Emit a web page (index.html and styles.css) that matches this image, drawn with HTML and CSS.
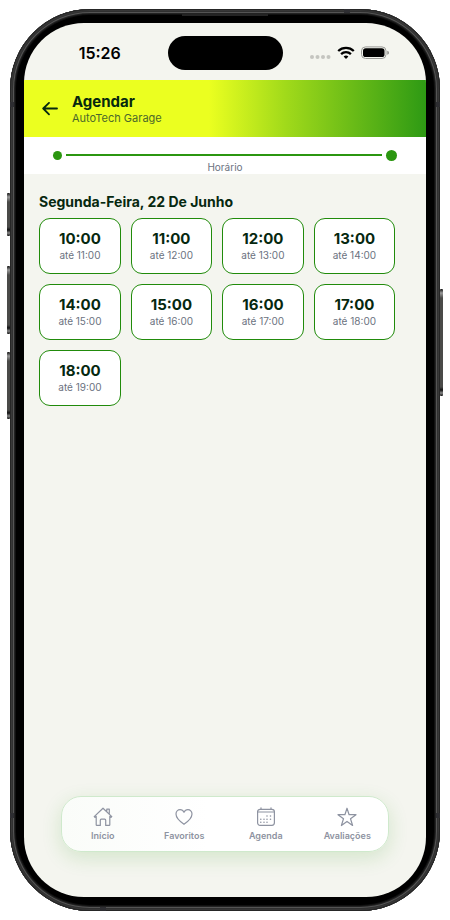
FILE: index.html
```html
<!DOCTYPE html>
<html lang="pt-BR">
<head>
<meta charset="utf-8">
<meta name="viewport" content="width=device-width, initial-scale=1">
<title>Agendar</title>
<link rel="stylesheet" href="styles.css">
</head>
<body>
<div class="phone">
  <span class="key key-action"></span>
  <span class="key key-up"></span>
  <span class="key key-down"></span>
  <span class="key key-power"></span>
  <span class="antenna antenna-left"></span>
  <span class="antenna antenna-right"></span>
  <span class="antenna antenna-left antenna-low"></span>
  <span class="antenna antenna-right antenna-low"></span>
  <span class="antenna antenna-top"></span>
  <span class="antenna antenna-bottom"></span>
  <span class="earpiece"></span>
  <div class="bezel">
  <div class="screen">
    <div class="status">
      <span class="clock">15:26</span>
      <span class="island"></span>
      <span class="signals">
        <svg width="21" height="14" viewBox="0 0 21 14" fill="#c4c5c0"><circle cx="2" cy="11" r="2"/><circle cx="7.500" cy="11" r="2"/><circle cx="13" cy="11" r="2"/><circle cx="18.500" cy="11" r="2"/></svg>
        <svg width="18" height="14" viewBox="0 0 18 14" fill="none" stroke="#000" stroke-width="2.300"><path d="M1.200 5a11.200 11.200 0 0 1 15.600 0"/><path d="M4.100 8.100a7 7 0 0 1 9.800 0"/><path d="M6.600 10.500a3.600 3.600 0 0 1 4.800 0L9 13z" fill="#000" stroke="none"/></svg>
        <svg width="28" height="14" viewBox="0 0 28 14"><rect x=".5" y=".9" width="24.500" height="11.600" rx="4" fill="none" stroke="#999a96"/><rect x="2" y="2.300" width="21.500" height="8.800" rx="2.700"/><path d="M26.200 4.700v4q2-.6 2-2t-2-2z" fill="#999a96"/></svg>
      </span>
    </div>
    <header class="header">
      <button class="back" type="button" aria-label="Voltar">
        <svg width="16" height="14" viewBox="0 0 16 14" fill="none" stroke="#06280f" stroke-width="1.800" stroke-linecap="round" stroke-linejoin="round"><path d="M15 6.500H1.200M7 .9 1.200 6.500 7 12.300"/></svg>
      </button>
      <div>
        <h1 class="title">Agendar</h1>
        <p class="subtitle">AutoTech Garage</p>
      </div>
    </header>
    <div class="stepper">
      <div class="track"><span class="dot"></span><span class="line"></span><span class="dot dot-current"></span></div>
      <span class="step-name">Horário</span>
    </div>
    <main class="content">
      <h2 class="day">Segunda-Feira, 22 De Junho</h2>
      <div class="slots">
        <button class="slot" type="button"><b>10:00</b><span>até 11:00</span></button>
        <button class="slot" type="button"><b>11:00</b><span>até 12:00</span></button>
        <button class="slot" type="button"><b>12:00</b><span>até 13:00</span></button>
        <button class="slot" type="button"><b>13:00</b><span>até 14:00</span></button>
        <button class="slot" type="button"><b>14:00</b><span>até 15:00</span></button>
        <button class="slot" type="button"><b>15:00</b><span>até 16:00</span></button>
        <button class="slot" type="button"><b>16:00</b><span>até 17:00</span></button>
        <button class="slot" type="button"><b>17:00</b><span>até 18:00</span></button>
        <button class="slot" type="button"><b>18:00</b><span>até 19:00</span></button>
      </div>
    </main>
    <nav class="tabs">
      <a class="tab" href="#inicio">
        <svg viewBox="0 0 20 20"><path d="M1.200 9.600 10 1.200l8.800 8.400-.8.800-1.200-1v8.400q0 .6-.6.600h-3.500v-5.200q0-1-1-1H8.300q-1 0-1 1v5.200H3.800q-.6 0-.6-.6V9.400l-1.200 1zM13.800 4.600V2.100h2.500V7"/></svg>
        Início
      </a>
      <a class="tab" href="#favoritos">
        <svg viewBox="0 0 20 20"><path d="M10 17.300C6 14.600 2 11.300 2 7.100 2 4.500 3.900 2.700 6.100 2.700c1.700 0 3.100.9 3.900 2.600.8-1.700 2.200-2.600 3.900-2.600C16.100 2.700 18 4.500 18 7.100c0 4.200-4 7.500-8 10.200z"/></svg>
        Favoritos
      </a>
      <a class="tab" href="#agenda">
        <svg viewBox="0 0 20 20"><rect x="1.600" y="2.300" width="16.800" height="16" rx="2.500"/><path d="M1.600 5h16.800M5 .8v1.500M15 .8v1.500"/><path class="days" d="M11 9h0M14.500 9h0M4.800 12.200h0M8 12.200h0M11 12.200h0M14.500 12.200h0M4.800 15.300h0M8 15.300h0M11 15.300h0"/></svg>
        Agenda
      </a>
      <a class="tab" href="#avaliacoes">
        <svg viewBox="0 0 20 20"><path d="m10 1.200 2.100 6.500H19l-5.500 4.100 2.100 6.700L10 14.400l-5.600 4.100 2.100-6.700L1 7.700h6.900z"/></svg>
        Avaliações
      </a>
    </nav>
  </div>
  </div>
</div>
</body>
</html>
```

FILE: styles.css
```css
* { box-sizing: border-box; }

body {
  margin: 0;
  padding: 9px 10px;
  background: #fff;
  color: #06280f;
  font-family: Inter, "Liberation Sans", sans-serif;
}

h1, h2, p { margin: 0; }
button { font: inherit; color: inherit; cursor: pointer; }

.phone {
  position: relative;
  display: flex;
  min-height: calc(100vh - 18px);
  padding: 6px;
  border-radius: 80px;
  background: #101010;
  box-shadow: inset 0 0 0 1px #262626, inset 0 0 0 2px #383838, inset 0 0 0 3px #303030, inset 0 0 0 4px #545454, inset 0 0 0 5px #222;
}

.bezel {
  flex: 1;
  display: flex;
  padding: 8px;
  border-radius: 74px;
  background: #000;
}

.key {
  position: absolute;
  width: 3px;
  border-radius: 1px;
  background: linear-gradient(#111, #999 4px, #4a4a48 9px, #4a4a48 calc(100% - 9px), #111 calc(100% - 6px), #888 calc(100% - 3px), #111);
}
.key-action { left: -3px; top: 184px; height: 43px; }
.key-up { left: -3px; top: 257px; height: 68px; }
.key-down { left: -3px; top: 343px; height: 67px; }
.key-power { right: -3px; top: 280px; height: 107px; }

.antenna {
  position: absolute;
  width: 4px;
  height: 5px;
  background: #2e2e32;
}
.antenna-left { left: 0; top: 93px; }
.antenna-right { right: 0; top: 93px; }
.antenna-low { top: auto; bottom: 93px; }
.antenna-top { top: 0; right: 90px; width: 6px; height: 4px; }
.antenna-bottom { bottom: 0; left: 90px; width: 6px; height: 4px; }

.earpiece {
  position: absolute;
  top: 5px;
  left: 40%;
  right: 40%;
  height: 2px;
  background: #242424;
}

.screen {
  flex: 1;
  display: flex;
  flex-direction: column;
  overflow: hidden;
  border-radius: 60px;
  background: #f4f5ef;
}

.status {
  display: grid;
  grid-template-columns: 1fr 115px 1fr;
  align-items: center;
  height: 57px;
  padding-top: 2px;
  color: #000;
}
.clock { padding-left: 8px; text-align: center; font-size: 16px; font-weight: 600; }
.island { height: 34px; border-radius: 17px; background: #000; }
.signals { display: flex; justify-content: center; gap: 6px; padding-right: 10px; }

.header {
  display: flex;
  align-items: center;
  gap: 14px;
  height: 57px;
  padding: 0 18px;
  background: linear-gradient(90deg, #ebff20 46%, #a1da1a 65%, #2e9a14);
}
.back { display: flex; padding: 0; border: 0; background: none; }
.title { font-size: 15px; line-height: 18px; font-weight: 700; }
.subtitle { font-size: 11px; line-height: 14px; color: #4b692a; }

.stepper {
  height: 37px;
  padding: 12px 29px 0;
  background: #fff;
  text-align: center;
}
.track { display: flex; align-items: center; gap: 4px; height: 12px; }
.dot { width: 9px; height: 9px; border-radius: 50%; background: #2b9610; }
.dot-current { width: 11px; height: 11px; }
.line { flex: 1; height: 2px; background: #2b9610; }
.step-name { display: block; font-size: 10px; line-height: 12px; color: #6b7280; }

.content { padding: 18px 15px; }
.day { margin-bottom: 7px; font-size: 14px; line-height: 19px; font-weight: 700; }
.slots {
  display: grid;
  grid-template-columns: repeat(4, 22%);
  column-gap: 2.6%;
  row-gap: 10px;
}
.slot {
  display: flex;
  flex-direction: column;
  align-items: center;
  justify-content: center;
  height: 56px;
  padding: 0;
  border: 1px solid #218b0b;
  border-radius: 11px;
  background: #fff;
}
.slot b { font-size: 15px; line-height: 18px; font-weight: 700; }
.slot span { font-size: 10px; line-height: 15px; color: #6b7280; }

.tabs {
  display: grid;
  grid-template-columns: repeat(4, 1fr);
  height: 56px;
  margin: auto 37px 45px;
  border: 1px solid #cfe9cc;
  border-radius: 20px;
  background: linear-gradient(90deg, #fafcf9, #fff 45%);
  box-shadow: 0 6px 20px rgba(43, 150, 16, .16);
}
.tab {
  display: flex;
  flex-direction: column;
  align-items: center;
  justify-content: center;
  gap: 3px;
  color: #8e93a1;
  font-size: 9px;
  line-height: 12px;
  font-weight: 600;
  text-decoration: none;
}
.tab svg {
  width: 20px;
  height: 20px;
  fill: none;
  stroke: currentColor;
  stroke-width: 1.2;
  stroke-linejoin: round;
  stroke-linecap: round;
}
.tab .days { stroke-width: 1.6; }
```
